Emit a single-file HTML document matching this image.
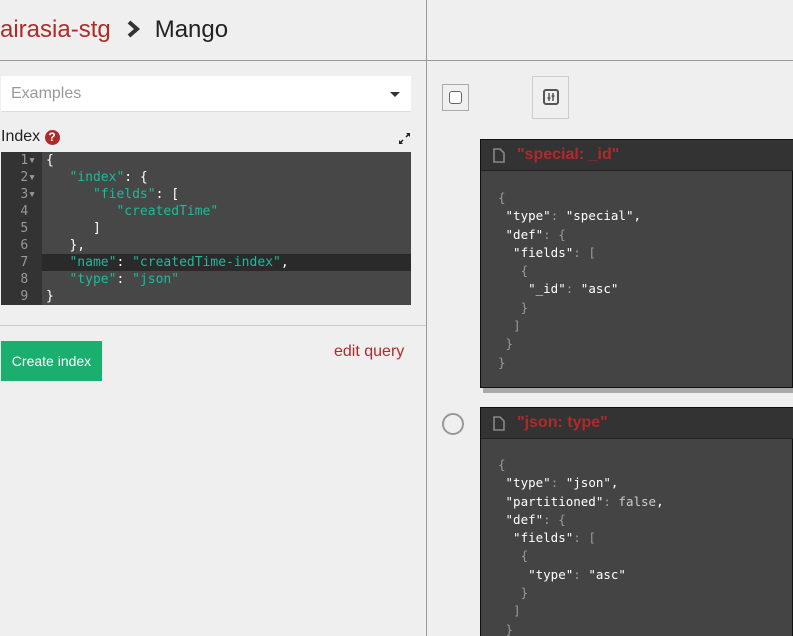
<!DOCTYPE html>
<html><head><meta charset="utf-8"><style>
*{margin:0;padding:0;box-sizing:border-box}
html,body{width:793px;height:636px;overflow:hidden}
body{background:#efefef;font-family:"Liberation Sans",sans-serif;position:relative}
.a{position:absolute}
.mono{font-family:"DejaVu Sans Mono","Liberation Mono",monospace}
.ed div{height:17px;line-height:17px;white-space:pre}
.g{color:#1abc9c}
.cb{white-space:pre;font-size:12.5px;line-height:18.3px;color:#fff}
.p{color:#999}
</style></head><body>
<div class="a" style="left:426px;top:0;width:1px;height:636px;background:#999"></div>
<div class="a" style="left:0;top:60px;width:793px;height:1px;background:#999"></div>
<div class="a" style="left:0;top:16px;font-size:24px;color:#222;white-space:nowrap"><span style="color:#b12a2a">airasia-stg</span><svg width="18" height="18" viewBox="0 0 18 18" style="vertical-align:-1px;margin:0 12px 0 14px"><path d="M4 2l8 7-8 7" stroke="#333" stroke-width="4" fill="none"/></svg>Mango</div>
<div class="a" style="left:1px;top:76px;width:410px;height:36px;background:#fff;border-bottom:1px solid #ddd"></div>
<div class="a" style="left:11px;top:85px;font-size:16px;color:#999">Examples</div>
<div class="a" style="left:390px;top:92px;width:0;height:0;border-left:5px solid transparent;border-right:5px solid transparent;border-top:5px solid #333"></div>
<div class="a" style="left:1px;top:128px;font-size:16px;color:#222">Index <span style="display:inline-block;width:15px;height:15px;border-radius:50%;background:#b12a2a;color:#fff;font-size:12px;font-weight:bold;text-align:center;line-height:15px;vertical-align:0">?</span></div>
<svg class="a" style="left:398px;top:132px" width="13" height="13" viewBox="0 0 13 13"><path d="M8 1h4v4zM5 12H1V8z" fill="#222"/><path d="M11 2L8 5M2 11l3-3" stroke="#222" stroke-width="1.5"/></svg>
<div class="a" style="left:1px;top:152px;width:410px;height:153px;background:#474747"></div>
<div class="a" style="left:1px;top:152px;width:41px;height:153px;background:#333"></div>
<div class="a" style="left:42px;top:254px;width:369px;height:17px;background:#2a2a2a"></div>
<div class="a mono ed" style="left:1px;top:152px;width:41px;font-size:13px;color:#999;text-align:right;padding-right:6px">
<div>1▾</div><div>2▾</div><div>3▾</div><div>4 </div><div>5 </div><div>6 </div><div>7 </div><div>8 </div><div>9 </div></div>
<div class="a mono ed" style="left:46px;top:152px;font-size:13px;color:#fff">
<div>{</div><div>   <span class="g">"index"</span>: {</div><div>      <span class="g">"fields"</span>: [</div><div>         <span class="g">"createdTime"</span></div><div>      ]</div><div>   },</div><div>   <span class="g">"name"</span>: <span class="g">"createdTime-index"</span>,</div><div>   <span class="g">"type"</span>: <span class="g">"json"</span></div><div>}</div></div>
<div class="a" style="left:0;top:325px;width:426px;height:1px;background:#ccc"></div>
<div class="a" style="left:1px;top:341px;width:101px;height:40px;background:#1aae6f;color:#fff;font-size:14px;line-height:40px;text-align:center">Create index</div>
<div class="a" style="left:334px;top:343px;font-size:16px;color:#b12a2a">edit query</div>
<div class="a" style="left:442px;top:84px;width:27px;height:27px;border:1px solid #aaa"><div style="margin:6px;width:13px;height:13px;border:1.5px solid #666;border-radius:3px;background:#fff"></div></div>
<div class="a" style="left:532px;top:76px;width:37px;height:43px;border:1px solid #ccc"><svg style="margin:12px 0 0 10px" width="16" height="16" viewBox="0 0 16 16"><rect x="1" y="1" width="14" height="14" rx="2" fill="none" stroke="#555" stroke-width="2"/><path d="M6 4v8M10 4v8" stroke="#555" stroke-width="1.5"/><path d="M4.5 9h3M8.5 7h3" stroke="#555" stroke-width="1.5"/></svg></div>
<div class="a" style="left:483px;top:139px;width:310px;height:254px;background:#aaa"></div>
<div class="a" style="left:480px;top:139px;width:313px;height:249px;background:#444;border:1px solid #111"></div>
<div class="a" style="left:481px;top:140px;width:312px;height:31px;background:#333;border-bottom:1px solid #222"></div>
<svg class="a" style="left:493px;top:148px" width="12" height="15" viewBox="0 0 12 15"><path d="M1 1h6l4 4v9H1z" fill="none" stroke="#888" stroke-width="1.6"/></svg>
<div class="a" style="left:517px;top:146px;font-size:16px;font-weight:bold;color:#b12a2a">"special: _id"</div>
<div class="a mono cb" style="left:498px;top:189px"><span class="p">{</span>
 "type"<span class="p">:</span> "special",
 "def"<span class="p">: {</span>
  "fields"<span class="p">: [</span>
   <span class="p">{</span>
    "_id"<span class="p">:</span> "asc"
   <span class="p">}</span>
  <span class="p">]</span>
 <span class="p">}</span>
<span class="p">}</span></div>
<div class="a" style="left:442px;top:413px;width:22px;height:22px;border:2px solid #999;border-radius:50%"></div>
<div class="a" style="left:480px;top:407px;width:313px;height:229px;background:#444;border:1px solid #111;border-bottom:0"></div>
<div class="a" style="left:481px;top:408px;width:312px;height:31px;background:#333;border-bottom:1px solid #222"></div>
<svg class="a" style="left:493px;top:416px" width="12" height="15" viewBox="0 0 12 15"><path d="M1 1h6l4 4v9H1z" fill="none" stroke="#888" stroke-width="1.6"/></svg>
<div class="a" style="left:517px;top:414px;font-size:16px;font-weight:bold;color:#b12a2a">"json: type"</div>
<div class="a mono cb" style="left:498px;top:456px"><span class="p">{</span>
 "type"<span class="p">:</span> "json",
 "partitioned"<span class="p">:</span> <span style="color:#ccc">false</span>,
 "def"<span class="p">: {</span>
  "fields"<span class="p">: [</span>
   <span class="p">{</span>
    "type"<span class="p">:</span> "asc"
   <span class="p">}</span>
  <span class="p">]</span>
 <span class="p">}</span></div>
</body></html>
